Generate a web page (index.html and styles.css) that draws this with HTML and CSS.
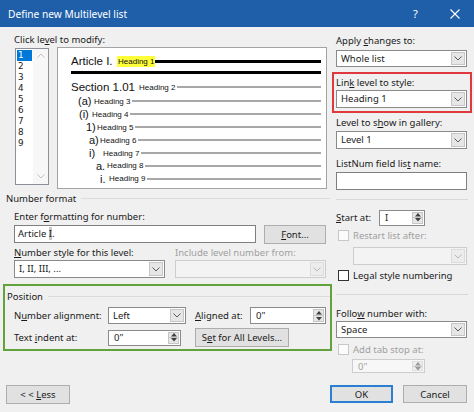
FILE: index.html
```html
<!DOCTYPE html>
<html lang="en">
<head>
<meta charset="utf-8">
<title>Define new Multilevel list</title>
<link rel="stylesheet" href="styles.css">
</head>
<body>
<div class="titlebar">
  <span class="title">Define new Multilevel list</span>
  <span class="tb-btn">?</span>
  <span class="tb-btn"><svg width="10" height="10" viewBox="0 0 10 10"><path d="M0.5 0.5L9.5 9.5M9.5 0.5L0.5 9.5" stroke="#fff" stroke-width="1.1"/></svg></span>
</div>
<div class="content">
  <div class="leftcol">
    <div class="lbl top-lbl">Click le<u>v</u>el to modify:</div>
    <div class="listrow">
      <div class="levels">
        <div class="items">
          <div class="item sel">1</div>
          <div class="item">2</div>
          <div class="item">3</div>
          <div class="item">4</div>
          <div class="item">5</div>
          <div class="item">6</div>
          <div class="item">7</div>
          <div class="item">8</div>
          <div class="item">9</div>
        </div>
        <div class="vscroll">
          <svg width="8" height="5" viewBox="0 0 8 5"><path d="M0.5 4.5L4 1L7.5 4.5" fill="none" stroke="#c2c2c2"/></svg>
          <svg width="8" height="5" viewBox="0 0 8 5"><path d="M0.5 0.5L4 4L7.5 0.5" fill="none" stroke="#c2c2c2"/></svg>
        </div>
      </div>
      <div class="preview">
        <div class="pv big l1"><span class="n">Article I.</span><span class="h hl">Heading 1</span><span class="ln thick"></span></div>
        <div class="rule"></div>
        <div class="pv big l2"><span class="n">Section 1.01</span><span class="h">Heading 2</span><span class="ln"></span></div>
        <div class="pv l3"><span class="n">(a)</span><span class="h">Heading 3</span><span class="ln"></span></div>
        <div class="pv l4"><span class="n">(i)</span><span class="h">Heading 4</span><span class="ln"></span></div>
        <div class="pv l5"><span class="n">1)</span><span class="h">Heading 5</span><span class="ln"></span></div>
        <div class="pv l6"><span class="n">a)</span><span class="h">Heading 6</span><span class="ln"></span></div>
        <div class="pv l7"><span class="n">i)</span><span class="h">Heading 7</span><span class="ln"></span></div>
        <div class="pv l8"><span class="n">a.</span><span class="h">Heading 8</span><span class="ln"></span></div>
        <div class="pv l9"><span class="n">i.</span><span class="h">Heading 9</span><span class="ln"></span></div>
      </div>
    </div>

    <div class="group-hdr nf"><span>Number format</span><span class="hr"></span></div>
    <div class="lbl ind fmt-lbl">Enter f<u>o</u>rmatting for number:</div>
    <div class="frow r-fmt">
      <div class="textbox w-fmt">Article <span class="selI">I</span>.</div>
      <div class="btn btn-font"><u>F</u>ont...</div>
    </div>
    <div class="frow r-stylelbl">
      <div class="lbl w-style"><u>N</u>umber style for this level:</div>
      <div class="lbl dis">Include level number from:</div>
    </div>
    <div class="frow r-style">
      <div class="combo w-151"><span class="val">I, II, III, ...</span><span class="drop"><svg width="8" height="5" viewBox="0 0 8 5"><path d="M0.5 0.5L4 4L7.5 0.5" fill="none" stroke="#5a5a5a"/></svg></span></div>
      <div class="combo w-151 disabled"><span class="val"></span><span class="drop"><svg width="8" height="5" viewBox="0 0 8 5"><path d="M0.5 0.5L4 4L7.5 0.5" fill="none" stroke="#b8b8b8"/></svg></span></div>
    </div>

    <div class="position">
      <div class="group-hdr pos"><span>Position</span><span class="hr"></span></div>
      <div class="prow p1">
        <div class="lbl plbl">N<u>u</u>mber alignment:</div>
        <div class="combo w-align"><span class="val">Left</span><span class="drop"><svg width="8" height="5" viewBox="0 0 8 5"><path d="M0.5 0.5L4 4L7.5 0.5" fill="none" stroke="#5a5a5a"/></svg></span></div>
        <div class="lbl albl"><u>A</u>ligned at:</div>
        <div class="spin w-aligned"><span class="val">0"</span><span class="spinbtn"><span class="half"><svg width="6" height="4" viewBox="0 0 6 4"><path d="M3 0L6 3.5H0z" fill="#404040"/></svg></span><span class="half lower"><svg width="6" height="4" viewBox="0 0 6 4"><path d="M3 3.5L6 0H0z" fill="#404040"/></svg></span></span></div>
      </div>
      <div class="prow p2">
        <div class="lbl plbl">Text <u>i</u>ndent at:</div>
        <div class="spin w-indent"><span class="val">0"</span><span class="spinbtn"><span class="half"><svg width="6" height="4" viewBox="0 0 6 4"><path d="M3 0L6 3.5H0z" fill="#404040"/></svg></span><span class="half lower"><svg width="6" height="4" viewBox="0 0 6 4"><path d="M3 3.5L6 0H0z" fill="#404040"/></svg></span></span></div>
        <div class="btn btn-setall">S<u>e</u>t for All Levels...</div>
      </div>
    </div>

    <div class="btn btn-less">&lt;&nbsp;&lt;&nbsp;<u>L</u>ess</div>
  </div>

  <div class="rightcol">
    <div class="lbl r-apply">Apply <u>c</u>hanges to:</div>
    <div class="combo rw r-applycb"><span class="val">Whole list</span><span class="drop"><svg width="8" height="5" viewBox="0 0 8 5"><path d="M0.5 0.5L4 4L7.5 0.5" fill="none" stroke="#5a5a5a"/></svg></span></div>
    <div class="redbox">
      <div class="lbl">Lin<u>k</u> level to style:</div>
      <div class="combo rw r-linkcb"><span class="val">Heading 1</span><span class="drop"><svg width="8" height="5" viewBox="0 0 8 5"><path d="M0.5 0.5L4 4L7.5 0.5" fill="none" stroke="#5a5a5a"/></svg></span></div>
    </div>
    <div class="lbl r-gal">Level to s<u>h</u>ow in gallery:</div>
    <div class="combo rw r-galcb"><span class="val">Level 1</span><span class="drop"><svg width="8" height="5" viewBox="0 0 8 5"><path d="M0.5 0.5L4 4L7.5 0.5" fill="none" stroke="#5a5a5a"/></svg></span></div>
    <div class="lbl r-ln">ListNum field lis<u>t</u> name:</div>
    <div class="textbox rw r-lntb"></div>
    <div class="sep r-sep1"></div>
    <div class="srow r-start">
      <div class="lbl w-start"><u>S</u>tart at:</div>
      <div class="spin w-startsp"><span class="val">I</span><span class="spinbtn"><span class="half"><svg width="6" height="4" viewBox="0 0 6 4"><path d="M3 0L6 3.5H0z" fill="#404040"/></svg></span><span class="half lower"><svg width="6" height="4" viewBox="0 0 6 4"><path d="M3 3.5L6 0H0z" fill="#404040"/></svg></span></span></div>
    </div>
    <div class="chkrow r-restart dis"><span class="chk off"></span><span>Restart list after:</span></div>
    <div class="combo disabled w-restart"><span class="val"></span><span class="drop"><svg width="8" height="5" viewBox="0 0 8 5"><path d="M0.5 0.5L4 4L7.5 0.5" fill="none" stroke="#b8b8b8"/></svg></span></div>
    <div class="chkrow r-legal"><span class="chk"></span><span>Legal style numbering</span></div>
    <div class="sep r-sep2"></div>
    <div class="lbl r-follow">Follo<u>w</u> number with:</div>
    <div class="combo rw r-followcb"><span class="val">Space</span><span class="drop"><svg width="8" height="5" viewBox="0 0 8 5"><path d="M0.5 0.5L4 4L7.5 0.5" fill="none" stroke="#5a5a5a"/></svg></span></div>
    <div class="chkrow r-tab dis"><span class="chk off"></span><span>Add tab stop at:</span></div>
    <div class="spin disabled w-tab"><span class="val">0"</span><span class="spinbtn"><span class="half"><svg width="6" height="4" viewBox="0 0 6 4"><path d="M3 0L6 3.5H0z" fill="#9a9a9a"/></svg></span><span class="half lower"><svg width="6" height="4" viewBox="0 0 6 4"><path d="M3 3.5L6 0H0z" fill="#9a9a9a"/></svg></span></span></div>
    <div class="btnrow">
      <div class="btn ok">OK</div>
      <div class="btn cancel">Cancel</div>
    </div>
  </div>
</div>
</body>
</html>
```

FILE: styles.css
```css
html, body {
  margin: 0;
  padding: 0;
}
body {
  width: 474px;
  height: 412px;
  overflow: hidden;
  background: #f0f0f0;
  font-family: "Noto Sans", "Open Sans", sans-serif;
  font-size: 9.5px;
  color: #1a1a1a;
}
u {
  text-decoration: underline;
  text-underline-offset: 1px;
}

/* title bar */
.titlebar {
  height: 27px;
  background: #1f5fa9;
  color: #fff;
  display: flex;
  align-items: center;
}
.title {
  flex: 1;
  padding-left: 8px;
  font-size: 10.2px;
}
.tb-btn {
  width: 39px;
  height: 27px;
  display: flex;
  align-items: center;
  justify-content: center;
  font-size: 11px;
}

.content {
  display: flex;
}
.leftcol {
  width: 330px;
  flex: none;
}
.rightcol {
  width: 138px;
  padding-left: 6px;
  flex: none;
}

.lbl {
  height: 13px;
  line-height: 13px;
  white-space: nowrap;
}
.dis, .dis span {
  color: #a0a0a0;
}
.top-lbl {
  margin: 6px 0 0 14px;
}

/* level list + preview */
.listrow {
  display: flex;
  align-items: flex-start;
  margin-top: 1px;
  padding-left: 15px;
}
.levels {
  box-sizing: border-box;
  width: 34px;
  height: 137px;
  margin-top: 1px;
  border: 1px solid #8c9099;
  background: #fff;
  display: flex;
}
.items {
  width: 15px;
  margin-left: 1px;
  padding-top: 1px;
}
.item {
  height: 11px;
  line-height: 11px;
  font-family: "DejaVu Sans", sans-serif;
  font-size: 8.8px;
  padding-left: 1px;
  overflow: hidden;
}
.item.sel {
  background: #0078d7;
  color: #fff;
}
.vscroll {
  width: 15px;
  margin-left: auto;
  background: #f7f7f7;
  display: flex;
  flex-direction: column;
  justify-content: space-between;
  align-items: center;
  padding: 4px 0 5px;
  box-sizing: border-box;
}

.preview {
  box-sizing: border-box;
  width: 270px;
  height: 142px;
  margin-left: 8px;
  border: 1px solid #a3a3a3;
  background: #fff;
  padding: 5px 5px 0 0;
  font-family: "Liberation Sans", Arial, sans-serif;
  color: #111;
}
.pv {
  display: flex;
  align-items: center;
  height: 12.9px;
}
.pv .n {
  flex: none;
  font-size: 11px;
  white-space: nowrap;
}
.pv .h {
  flex: none;
  font-size: 8px;
  white-space: nowrap;
}
.pv .ln {
  flex: 1;
  height: 2px;
  background: #a8a8a8;
  margin-left: 2px;
}
.pv.big {
  height: 16px;
}
.pv.big .n {
  font-size: 11.5px;
}
.hl {
  background: #ffff3a;
  padding: 1px;
}
.pv .ln.thick {
  height: 3px;
  background: #000;
  margin-left: 0;
}
.rule {
  height: 3px;
  background: #000;
  margin: 2px 0 0 13px;
}
.pv.l2 { margin-top: 5px; }
.l1, .l2 { padding-left: 13px; }
.l1 .n { width: 46px; }
.l2 .n { width: 68px; }
.l3 { padding-left: 20px; }
.l3 .n { width: 16px; }
.l4 { padding-left: 21px; }
.l4 .n { width: 13px; }
.l5 { padding-left: 28px; }
.l5 .n { width: 11px; }
.l6 { padding-left: 31px; }
.l6 .n { width: 11px; }
.l7 { padding-left: 31px; }
.l7 .n { width: 14px; }
.l8 { padding-left: 38px; }
.l8 .n { width: 11px; }
.l9 { padding-left: 42px; }
.l9 .n { width: 9px; }

/* group headers */
.group-hdr {
  display: flex;
  align-items: center;
  height: 13px;
  line-height: 13px;
  white-space: nowrap;
}
.group-hdr .hr {
  flex: 1;
  height: 1px;
  background: #dcdcdc;
  margin-left: 5px;
}
.nf {
  margin-top: 3px;
  padding-left: 6px;
}
.ind {
  padding-left: 14px;
}
.fmt-lbl {
  margin-top: 5px;
}
.frow {
  display: flex;
  padding-left: 14px;
}
.r-fmt {
  margin-top: 2px;
  align-items: flex-start;
}
.r-stylelbl {
  margin-top: 1.5px;
}
.w-style {
  width: 161px;
}
.r-style {
  margin-top: 1.5px;
  gap: 10px;
}

/* controls */
.textbox {
  box-sizing: border-box;
  height: 18px;
  border: 1px solid #7f7f7f;
  background: #fff;
  padding-left: 3px;
  line-height: 16px;
  white-space: nowrap;
}
.selI {
  background: #cacaca;
}
.w-fmt {
  width: 242px;
}
.combo {
  box-sizing: border-box;
  height: 18px;
  border: 1px solid #8a8a8a;
  background: #fff;
  display: flex;
}
.combo .val {
  flex: 1;
  padding-left: 4px;
  line-height: 16px;
  white-space: nowrap;
  overflow: hidden;
}
.combo .drop {
  box-sizing: border-box;
  width: 14px;
  margin: 1px;
  background: #e6e6e6;
  border: 1px solid #c6c6c6;
  display: flex;
  align-items: center;
  justify-content: center;
}
.combo.disabled {
  background: #f3f3f3;
  border-color: #cdcdcd;
}
.combo.disabled .drop {
  background: #ececec;
  border-color: #dcdcdc;
}
.w-151 {
  width: 151px;
}
.spin {
  box-sizing: border-box;
  border: 1px solid #8a8a8a;
  background: #fff;
  display: flex;
}
.spin .val {
  flex: 1;
  padding-left: 5px;
  display: flex;
  align-items: center;
  white-space: nowrap;
}
.spin .spinbtn {
  box-sizing: border-box;
  width: 11px;
  margin: 1px;
  background: #e6e6e6;
  border: 1px solid #c6c6c6;
  display: flex;
  flex-direction: column;
}
.spin .half {
  flex: 1;
  display: flex;
  align-items: center;
  justify-content: center;
}
.spin .half.lower {
  border-top: 1px solid #c6c6c6;
}
.spin.disabled {
  background: #f7f7f7;
  border-color: #cdcdcd;
  color: #a0a0a0;
}
.spin.disabled .spinbtn {
  background: #efefef;
  border-color: #dddddd;
}
.btn {
  box-sizing: border-box;
  border: 1px solid #adadad;
  background: #e1e1e1;
  display: flex;
  align-items: center;
  justify-content: center;
  white-space: nowrap;
}
.btn-font {
  width: 62px;
  height: 19px;
  margin-left: 8px;
}

/* position group */
.position {
  box-sizing: border-box;
  width: 329px;
  height: 67px;
  margin: 6px 0 0 3px;
  border: 2px solid #62a23a;
}
.pos {
  margin-top: 3.5px;
  padding-left: 2px;
}
.prow {
  display: flex;
  align-items: center;
  padding-left: 9px;
}
.p1 {
  margin-top: 4.5px;
  height: 17px;
}
.p2 {
  margin-top: 4px;
  height: 19px;
}
.plbl {
  width: 94px;
}
.w-align {
  width: 78px;
  height: 17px;
}
.albl {
  width: 55px;
  margin-left: 9px;
}
.w-aligned {
  width: 76px;
  height: 17px;
}
.w-indent {
  width: 73px;
  height: 16px;
}
.btn-setall {
  width: 94px;
  height: 19px;
  margin-left: 14px;
}
.btn-less {
  width: 64px;
  height: 19px;
  margin: 34px 0 0 6px;
}

/* right column */
.rw {
  width: 131px;
}
.r-apply {
  margin-top: 7px;
}
.r-applycb {
  margin-top: 3px;
  height: 17px;
}
.redbox {
  box-sizing: border-box;
  width: 140px;
  margin: 5px 0 0 -4px;
  border: 2px solid #e0393d;
  padding: 1.5px 2px 3px 2px;
}
.r-linkcb {
  margin-top: 1.5px;
}
.r-gal {
  margin-top: 3px;
}
.r-galcb {
  margin-top: 2px;
}
.r-ln {
  margin-top: 7.5px;
}
.r-lntb {
  margin-top: 2.5px;
}
.sep {
  width: 132px;
  height: 1px;
  background: #d8d8d8;
}
.r-sep1 {
  margin-top: 8.5px;
}
.srow {
  display: flex;
  align-items: center;
}
.r-start {
  margin-top: 10px;
  height: 16px;
}
.w-start {
  width: 43px;
}
.w-startsp {
  width: 46px;
  height: 16px;
}
.chkrow {
  display: flex;
  align-items: center;
  height: 13px;
  line-height: 13px;
  white-space: nowrap;
}
.chk {
  box-sizing: border-box;
  width: 11px;
  height: 11px;
  margin: 0 4px 0 2px;
  border: 1px solid #333;
  background: #fff;
  flex: none;
}
.chk.off {
  border-color: #c8c8c8;
  background: #fbfbfb;
}
.r-restart {
  margin-top: 3.5px;
}
.w-restart {
  width: 114px;
  margin: 5px 0 0 17px;
}
.r-legal {
  margin-top: 3.5px;
}
.r-sep2 {
  margin-top: 12.5px;
}
.r-follow {
  margin-top: 11.5px;
}
.r-followcb {
  margin-top: 1.5px;
  height: 17px;
}
.r-tab {
  margin-top: 4.5px;
}
.w-tab {
  width: 73px;
  height: 14px;
  margin: 3.5px 0 0 16px;
}
.btnrow {
  display: flex;
  margin: 12px 0 0 -6px;
}
.btnrow .btn {
  height: 18px;
}
.ok {
  width: 63px;
  border: 2px solid #2b7fd3;
}
.cancel {
  width: 64px;
  margin-left: 10px;
}
```
